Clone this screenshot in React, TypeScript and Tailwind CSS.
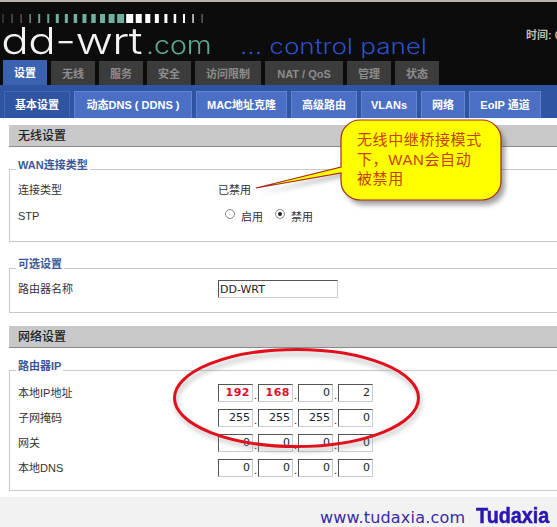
import React from 'react';

const cjk = '"Liberation Sans", "Noto Sans CJK SC", sans-serif';

const mainTabs = [
  { label: '设置', w: 'w-[44px]', active: true },
  { label: '无线', w: 'w-[44px]' },
  { label: '服务', w: 'w-[44px]' },
  { label: '安全', w: 'w-[44px]' },
  { label: '访问限制', w: 'w-[66px]' },
  { label: 'NAT / QoS', w: 'w-[78px]' },
  { label: '管理', w: 'w-[44px]' },
  { label: '状态', w: 'w-[44px]' },
];

const subTabs = [
  { label: '基本设置', w: 'w-[66px]', active: true },
  { label: '动态DNS ( DDNS )', w: 'w-[118px]' },
  { label: 'MAC地址克隆', w: 'w-[91px]' },
  { label: '高级路由', w: 'w-[66px]' },
  { label: 'VLANs', w: 'w-[56px]' },
  { label: '网络', w: 'w-[44px]' },
  { label: 'EoIP 通道', w: 'w-[72px]' },
];

// level meter above the logo: [width, colour]
const ticks: [number, string][] = [
  [1, '#555'], [1, '#777'], [1, '#777'], [1.5, '#6a8f85'], [2, '#6aa595'], [2, '#6aa595'], [3, '#6fb09e'],
  [3, '#6fb09e'], [3.5, '#6fb09e'], [4, '#6fb09e'], [4.5, '#6fb09e'], [5, '#6fb09e'], [6, '#6fb09e'], [7, '#6fb09e'],
  [7, '#fff'], [6, '#fff'], [5, '#fff'], [4, '#fff'], [3, '#fff'], [2.5, '#fff'], [2, '#fff'], [1.5, '#ddd'], [1, '#888'],
];

function Meter() {
  return (
    <svg width="215" height="9" className="block">
      {ticks.map(([w, c], i) => (
        <rect key={i} x={3 + i * 9.05 - w / 2} y="0" width={w} height="9" fill={c} />
      ))}
    </svg>
  );
}

function SectionBar({ title }: { title: string }) {
  return (
    <div className="h-[22px] bg-[#c8c8c8] border-b border-[#8a8a8a] pl-[9px] text-[12px] leading-[23px] text-[#222] font-medium">
      {title}
    </div>
  );
}

function Fieldset({ legend, h, children }: { legend: string; h: string; children: React.ReactNode }) {
  return (
    <div className={`relative border border-[#c8c8c8] border-r-0 ${h}`}>
      <div className="absolute left-[6px] -top-[12px] bg-white px-[2px] text-[11px] leading-[14px] font-bold text-[#3b5998]">
        {legend}
      </div>
      {children}
    </div>
  );
}

function Row({ label, h = 'h-[25px]', children }: { label: string; h?: string; children?: React.ReactNode }) {
  return (
    <div className={`flex items-center ${h}`}>
      <div className="w-[208px] pl-[8px] pt-[1px] text-[11px] text-[#333]">{label}</div>
      {children}
    </div>
  );
}

function Octet({ value, red }: { value: string; red?: boolean }) {
  return (
    <input
      readOnly
      value={value}
      className={`w-[35px] h-[18px] border border-[#ccc] border-t-[#555] border-l-[#555] pr-[2px] text-right text-[11px] leading-none outline-none ${
        red ? 'text-[#e0102a] font-bold tracking-[0.5px]' : 'text-[#222]'
      }`}
      style={{ fontFamily: '"DejaVu Sans", sans-serif' }}
    />
  );
}

function IpRow({ label, values, red }: { label: string; values: string[]; red?: boolean }) {
  return (
    <Row label={label}>
      <div className="flex items-center">
        {values.map((v, i) => (
          <React.Fragment key={i}>
            <Octet value={v} red={red && i < 2} />
            {i < 3 && <span className="w-[5px] text-center text-[11px] leading-none pt-[5px] text-[#222]">.</span>}
          </React.Fragment>
        ))}
      </div>
    </Row>
  );
}

function Radio({ on, label }: { on?: boolean; label: string }) {
  return (
    <span className="flex items-center mr-[12px]">
      <span className="relative w-[10px] h-[10px] rounded-full border border-[#888] bg-white mb-[4px] mr-[6px]">
        {on && <span className="absolute left-[2px] top-[2px] w-[4px] h-[4px] rounded-full bg-[#222]" />}
      </span>
      <span className="text-[11px] text-[#333] pt-[2px]">{label}</span>
    </span>
  );
}

export default function App() {
  return (
    <div className="relative w-[557px] h-[527px] overflow-hidden bg-white" style={{ fontFamily: cjk }}>
      {/* header */}
      <div className="h-[85px] bg-[#0c0c0c] border-t-2 border-[#b9b5ad] flex flex-col">
        <div className="flex-1 relative pt-[12px]">
          <Meter />
          <div className="flex items-baseline h-[33px] whitespace-nowrap" style={{ fontFamily: 'Inter, sans-serif', fontWeight: 300 }}>
            <span className="text-[#f2f2f2] text-[37px] leading-[36px] origin-left scale-x-[1.24] w-[146px] tracking-[-0.5px] pl-[1px]">
              dd-wrt
            </span>
            <span className="text-[#5fa892] text-[25px] leading-[30px] origin-left scale-x-[1.14] w-[94px]">
              .com
            </span>
            <span className="text-[#2d50c8] text-[21px] leading-[30px] origin-left scale-x-[1.24]">
              ... control panel
            </span>
          </div>
          <div className="absolute left-[526px] top-[25px] text-[11px] font-bold text-[#bbb] whitespace-nowrap">时间: 0</div>
        </div>
        <div className="flex h-[25px] shrink-0 gap-[4px] pl-[3px]">
          {mainTabs.map((t) => (
            <div
              key={t.label}
              className={`${t.w} flex items-center justify-center pt-[2px] text-[11px] font-bold ${
                t.active ? 'bg-[#3a62ae] text-white' : 'bg-[#3c3c3c] text-[#8c8c8c] mt-[1px]'
              }`}
            >
              {t.label}
            </div>
          ))}
        </div>
      </div>

      {/* sub navigation */}
      <div className="h-[33px] bg-[#2f55a2] flex items-end gap-[4px] pl-[4px]">
        {subTabs.map((t) => (
          <div
            key={t.label}
            className={`${t.w} h-[27px] flex items-center justify-center text-[11px] font-bold text-white border-t border-x whitespace-nowrap ${
              t.active ? 'bg-[#2f55a2] border-[#4467b4]' : 'bg-[#4a6fc5] border-[#6384d0]'
            }`}
          >
            {t.label}
          </div>
        ))}
      </div>

      {/* content */}
      <div className="pl-[9px] pt-[7px]">
        <SectionBar title="无线设置" />
        <div className="pt-[22px]">
          <Fieldset legend="WAN连接类型" h="h-[73px]">
            <div className="pt-[7px]">
              <Row label="连接类型" h="h-[26px]">
                <span className="text-[11px] text-[#333]">已禁用</span>
              </Row>
              <Row label="STP" h="h-[26px]">
                <span className="pl-[7px] flex items-center">
                  <Radio label="启用" />
                  <Radio on label="禁用" />
                </span>
              </Row>
            </div>
          </Fieldset>
        </div>
        <div className="pt-[26px]">
          <Fieldset legend="可选设置" h="h-[45px]">
            <div className="pt-[10px]">
              <Row label="路由器名称" h="h-[20px]">
                <input
                  readOnly
                  value="DD-WRT"
                  className="w-[120px] h-[18px] border border-[#ccc] border-t-[#555] border-l-[#555] pl-[1px] text-[11px] text-[#222] outline-none"
                  style={{ fontFamily: '"DejaVu Sans", sans-serif' }}
                />
              </Row>
            </div>
          </Fieldset>
        </div>
        <div className="pt-[13px]">
          <SectionBar title="网络设置" />
        </div>
        <div className="pt-[22px]">
          <Fieldset legend="路由器IP" h="h-[121px]">
            <div className="pt-[9px]">
              <IpRow label="本地IP地址" values={['192', '168', '0', '2']} red />
              <IpRow label="子网掩码" values={['255', '255', '255', '0']} />
              <IpRow label="网关" values={['0', '0', '0', '0']} />
              <IpRow label="本地DNS" values={['0', '0', '0', '0']} />
            </div>
          </Fieldset>
        </div>
      </div>

      {/* footer */}
      <div className="absolute left-0 right-0 top-[497px] bottom-0 bg-[#f2f2f2] flex items-end pl-[320px] gap-[9px]">
        <span className="text-[16px] leading-[18px] text-[#3a2aa6] tracking-[0.2px] w-[147px] whitespace-nowrap" style={{ fontFamily: '"DejaVu Sans", sans-serif' }}>
          www.tudaxia.com
        </span>
        <span
          className="text-[22px] leading-[22px] font-bold text-[#2a16b0] w-[72px] origin-left scale-x-[0.9] [-webkit-text-stroke:0.5px_#2a16b0]"
          style={{ fontFamily: '"Liberation Sans", sans-serif' }}
        >
          Tudaxia
        </span>
      </div>

      {/* annotations pasted over the screenshot */}
      <svg width="557" height="527" className="absolute inset-0 pointer-events-none">
        <defs>
          <filter id="soft" x="-10%" y="-10%" width="125%" height="130%">
            <feGaussianBlur stdDeviation="2.5" />
          </filter>
        </defs>
        <path
          d="M348 128 a19 19 0 0 1 12-8 h122 a19 19 0 0 1 19 19 v42 a19 19 0 0 1-19 19 h-122 a19 19 0 0 1-19-19 v-10 L256 189 L341 167 v-28 a19 19 0 0 1 7-11z"
          fill="#555"
          opacity="0.55"
          filter="url(#soft)"
          transform="translate(4 5)"
        />
        <path
          d="M341 139 a19 19 0 0 1 19-19 h122 a19 19 0 0 1 19 19 v42 a19 19 0 0 1-19 19 h-122 a19 19 0 0 1-19-19 v-8 L256 188 L341 167 z"
          fill="#ffff00"
          stroke="#a52a1a"
          strokeWidth="1.2"
        />
        <ellipse cx="298" cy="402" rx="122" ry="48" fill="none" stroke="#888" strokeWidth="3" opacity="0.55" filter="url(#soft)" />
        <ellipse cx="296.5" cy="398" rx="122" ry="48.5" fill="none" stroke="#e0101c" strokeWidth="3" />
      </svg>
      <div className="absolute left-[357px] top-[130px] w-[135px] text-[15px] leading-[19.5px] text-[#c8400a] tracking-[0.6px] whitespace-nowrap">
        无线中继桥接模式
        <br />
        下，WAN会自动
        <br />
        被禁用
      </div>
    </div>
  );
}
